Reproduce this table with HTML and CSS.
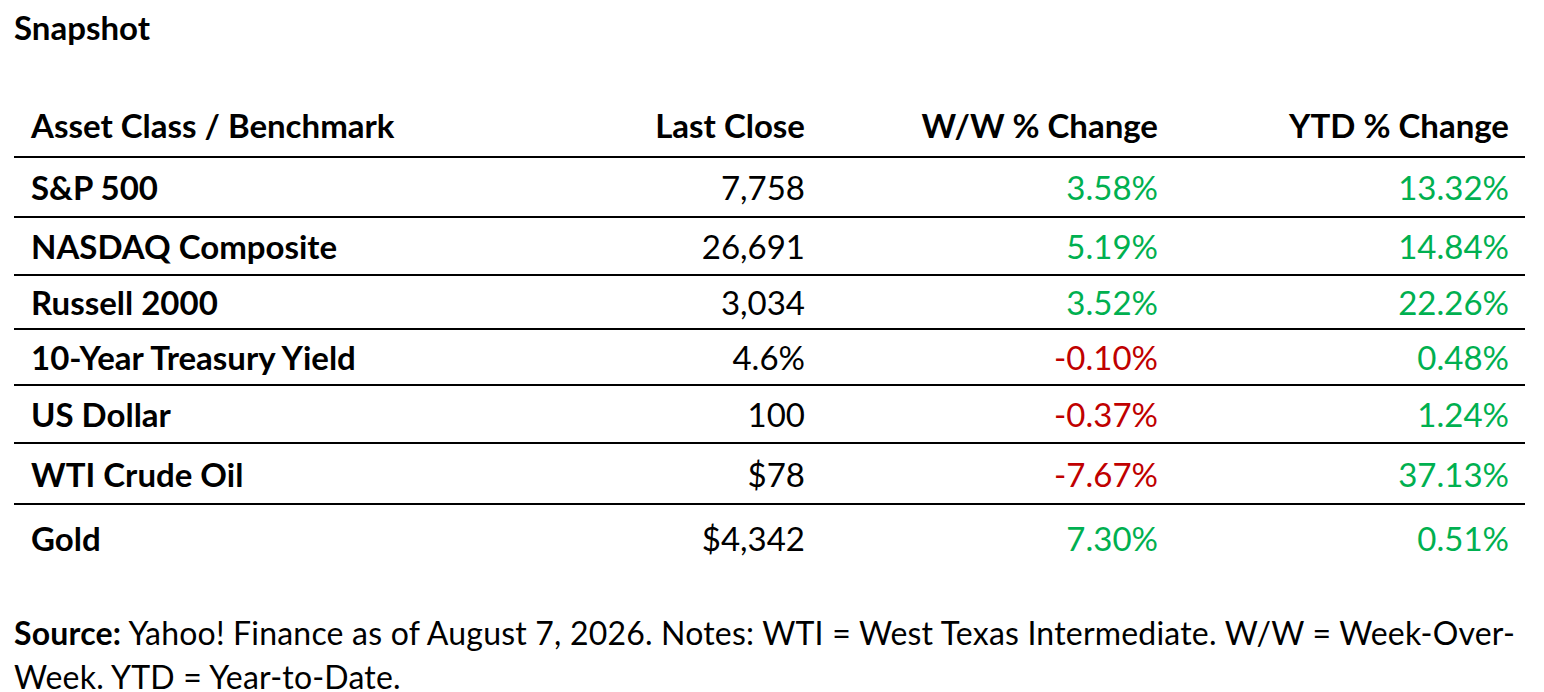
FILE: index.html
```html
<!DOCTYPE html>
<html lang="en">
<head>
<meta charset="utf-8">
<title>Snapshot</title>
<link rel="stylesheet" href="styles.css">
</head>
<body>
<div class="page">
  <h1 class="title">Snapshot</h1>
  <table class="snap">
    <colgroup>
      <col class="c1"><col class="c2"><col class="c3"><col class="c4">
    </colgroup>
    <thead>
      <tr>
        <th class="name">Asset Class / Benchmark</th>
        <th class="num">Last Close</th>
        <th class="num">W/W % Change</th>
        <th class="num">YTD % Change</th>
      </tr>
    </thead>
    <tbody>
      <tr><td class="name">S&amp;P 500</td><td class="num">7,758</td><td class="num up">3.58%</td><td class="num up">13.32%</td></tr>
      <tr><td class="name">NASDAQ Composite</td><td class="num">26,691</td><td class="num up">5.19%</td><td class="num up">14.84%</td></tr>
      <tr><td class="name">Russell 2000</td><td class="num">3,034</td><td class="num up">3.52%</td><td class="num up">22.26%</td></tr>
      <tr><td class="name">10-Year Treasury Yield</td><td class="num">4.6%</td><td class="num down">-0.10%</td><td class="num up">0.48%</td></tr>
      <tr><td class="name">US Dollar</td><td class="num">100</td><td class="num down">-0.37%</td><td class="num up">1.24%</td></tr>
      <tr><td class="name">WTI Crude Oil</td><td class="num">$78</td><td class="num down">-7.67%</td><td class="num up">37.13%</td></tr>
      <tr><td class="name">Gold</td><td class="num">$4,342</td><td class="num up">7.30%</td><td class="num up">0.51%</td></tr>
    </tbody>
  </table>
  <p class="note"><b>Source:</b> Yahoo! Finance as of August 7, 2026. Notes: WTI = West Texas Intermediate. W/W = Week-Over-Week. YTD = Year-to-Date.</p>
</div>
</body>
</html>
```
FILE: styles.css
```css
html, body {
  margin: 0;
  padding: 0;
  background: #ffffff;
}
.page {
  padding: 8px 14px 0 14px;
  font-family: Lato, "Liberation Sans", sans-serif;
  font-size: 33px;
  color: #000000;
}
.title {
  margin: 0;
  font-size: 33px;
  font-weight: 700;
  line-height: 39px;
}
.snap {
  margin-top: 46px;
  width: 1511px;
  border-collapse: collapse;
  table-layout: fixed;
}
.c1 { width: 506px; }
.c2 { width: 301px; }
.c3 { width: 353px; }
.c4 { width: 351px; }
.snap th, .snap td {
  padding: 0 16px 0 17px;
  line-height: 38px;
  vertical-align: middle;
  white-space: nowrap;
}
.snap th {
  font-weight: 700;
  height: 63px;
  border-bottom: 2px solid #000;
}
.snap td.name { font-weight: 700; }
.snap .name { text-align: left; }
.snap .num { text-align: right; }
.snap td.num { font-weight: 400; }
.snap tbody tr td { border-bottom: 2px solid #000; }
.snap tbody tr:last-child td { border-bottom: none; height: 66px; }
.snap tbody tr:nth-child(1) td { height: 58px; }
.snap tbody tr:nth-child(2) td { height: 56px; }
.snap tbody tr:nth-child(3) td { height: 52px; }
.snap tbody tr:nth-child(4) td { height: 54px; }
.snap tbody tr:nth-child(5) td { height: 56px; }
.snap tbody tr:nth-child(6) td { height: 59px; }
.up { color: #00b050; }
.down { color: #c00000; }
.note {
  margin: 40px 0 0 0;
  font-size: 32px;
  line-height: 44px;
  letter-spacing: 0.2px;
}
.note b { font-weight: 700; }
```
